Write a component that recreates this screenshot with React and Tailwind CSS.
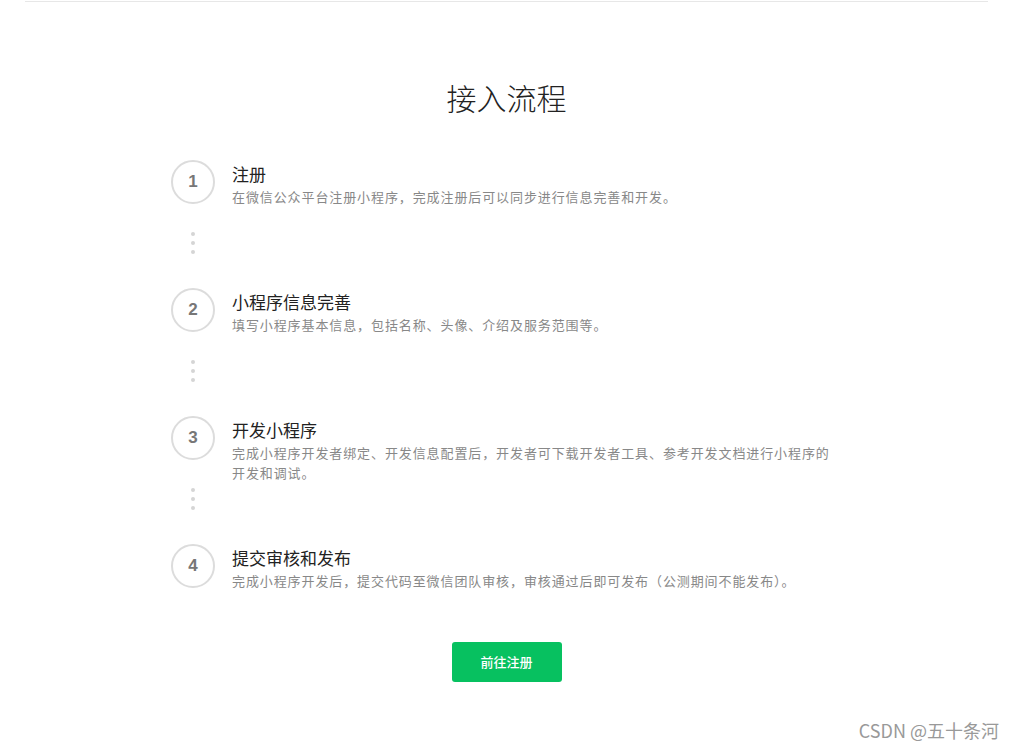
const steps = [
  ['注册', '在微信公众平台注册小程序，完成注册后可以同步进行信息完善和开发。'],
  ['小程序信息完善', '填写小程序基本信息，包括名称、头像、介绍及服务范围等。'],
  ['开发小程序', '完成小程序开发者绑定、开发信息配置后，开发者可下载开发者工具、参考开发文档进行小程序的开发和调试。'],
  ['提交审核和发布', '完成小程序开发后，提交代码至微信团队审核，审核通过后即可发布（公测期间不能发布）。'],
]

export default function App() {
  return (
    <div className="relative h-[751px] w-[1013px] bg-white" style={{ fontFamily: '"Microsoft YaHei", "Noto Sans CJK SC", sans-serif' }}>
      <div className="mx-[25px] h-[2px] border-b border-[#e7e7e7]" />
      <h1 className="mt-[76px] text-center text-[30px] leading-[38px] font-light text-[#222]">接入流程</h1>
      <div className="ml-[171px] mt-[44px]">
        {steps.map(([t, d], i) => (
          <div key={i} className={`flex gap-[17px] ${i < 3 ? 'h-[128px]' : 'h-[52px]'}`}>
            <div className="flex w-[44px] shrink-0 flex-col items-center">
              <div className="flex h-[44px] w-[44px] items-center justify-center rounded-full border-2 border-[#dcdcdc] text-[17px] font-bold text-[#777]" style={{ fontFamily: 'Arial, "Liberation Sans", sans-serif' }}>
                {i + 1}
              </div>
              {i < 3 && (
                <div className="mt-[28px] flex flex-col gap-[5px]">
                  <span className="h-[4px] w-[4px] rounded-full bg-[#d5d5d5]" />
                  <span className="h-[4px] w-[4px] rounded-full bg-[#d5d5d5]" />
                  <span className="h-[4px] w-[4px] rounded-full bg-[#d5d5d5]" />
                </div>
              )}
            </div>
            <div className="w-[610px] pt-[3px]">
              <div className="text-[17px] leading-[22px] text-[#222]">{t}</div>
              <div className="mt-[2px] text-[13px] leading-[20px] tracking-[0.9px] text-[#888]">{d}</div>
            </div>
          </div>
        ))}
      </div>
      <div className="mt-[46px] flex justify-center">
        <button className="h-[40px] w-[110px] rounded-[3px] bg-[#07c160] text-[13px] font-medium text-white">前往注册</button>
      </div>
      <div className="absolute bottom-[7px] right-[14px] text-[18px] text-[#999]">CSDN @五十条河</div>
    </div>
  )
}
